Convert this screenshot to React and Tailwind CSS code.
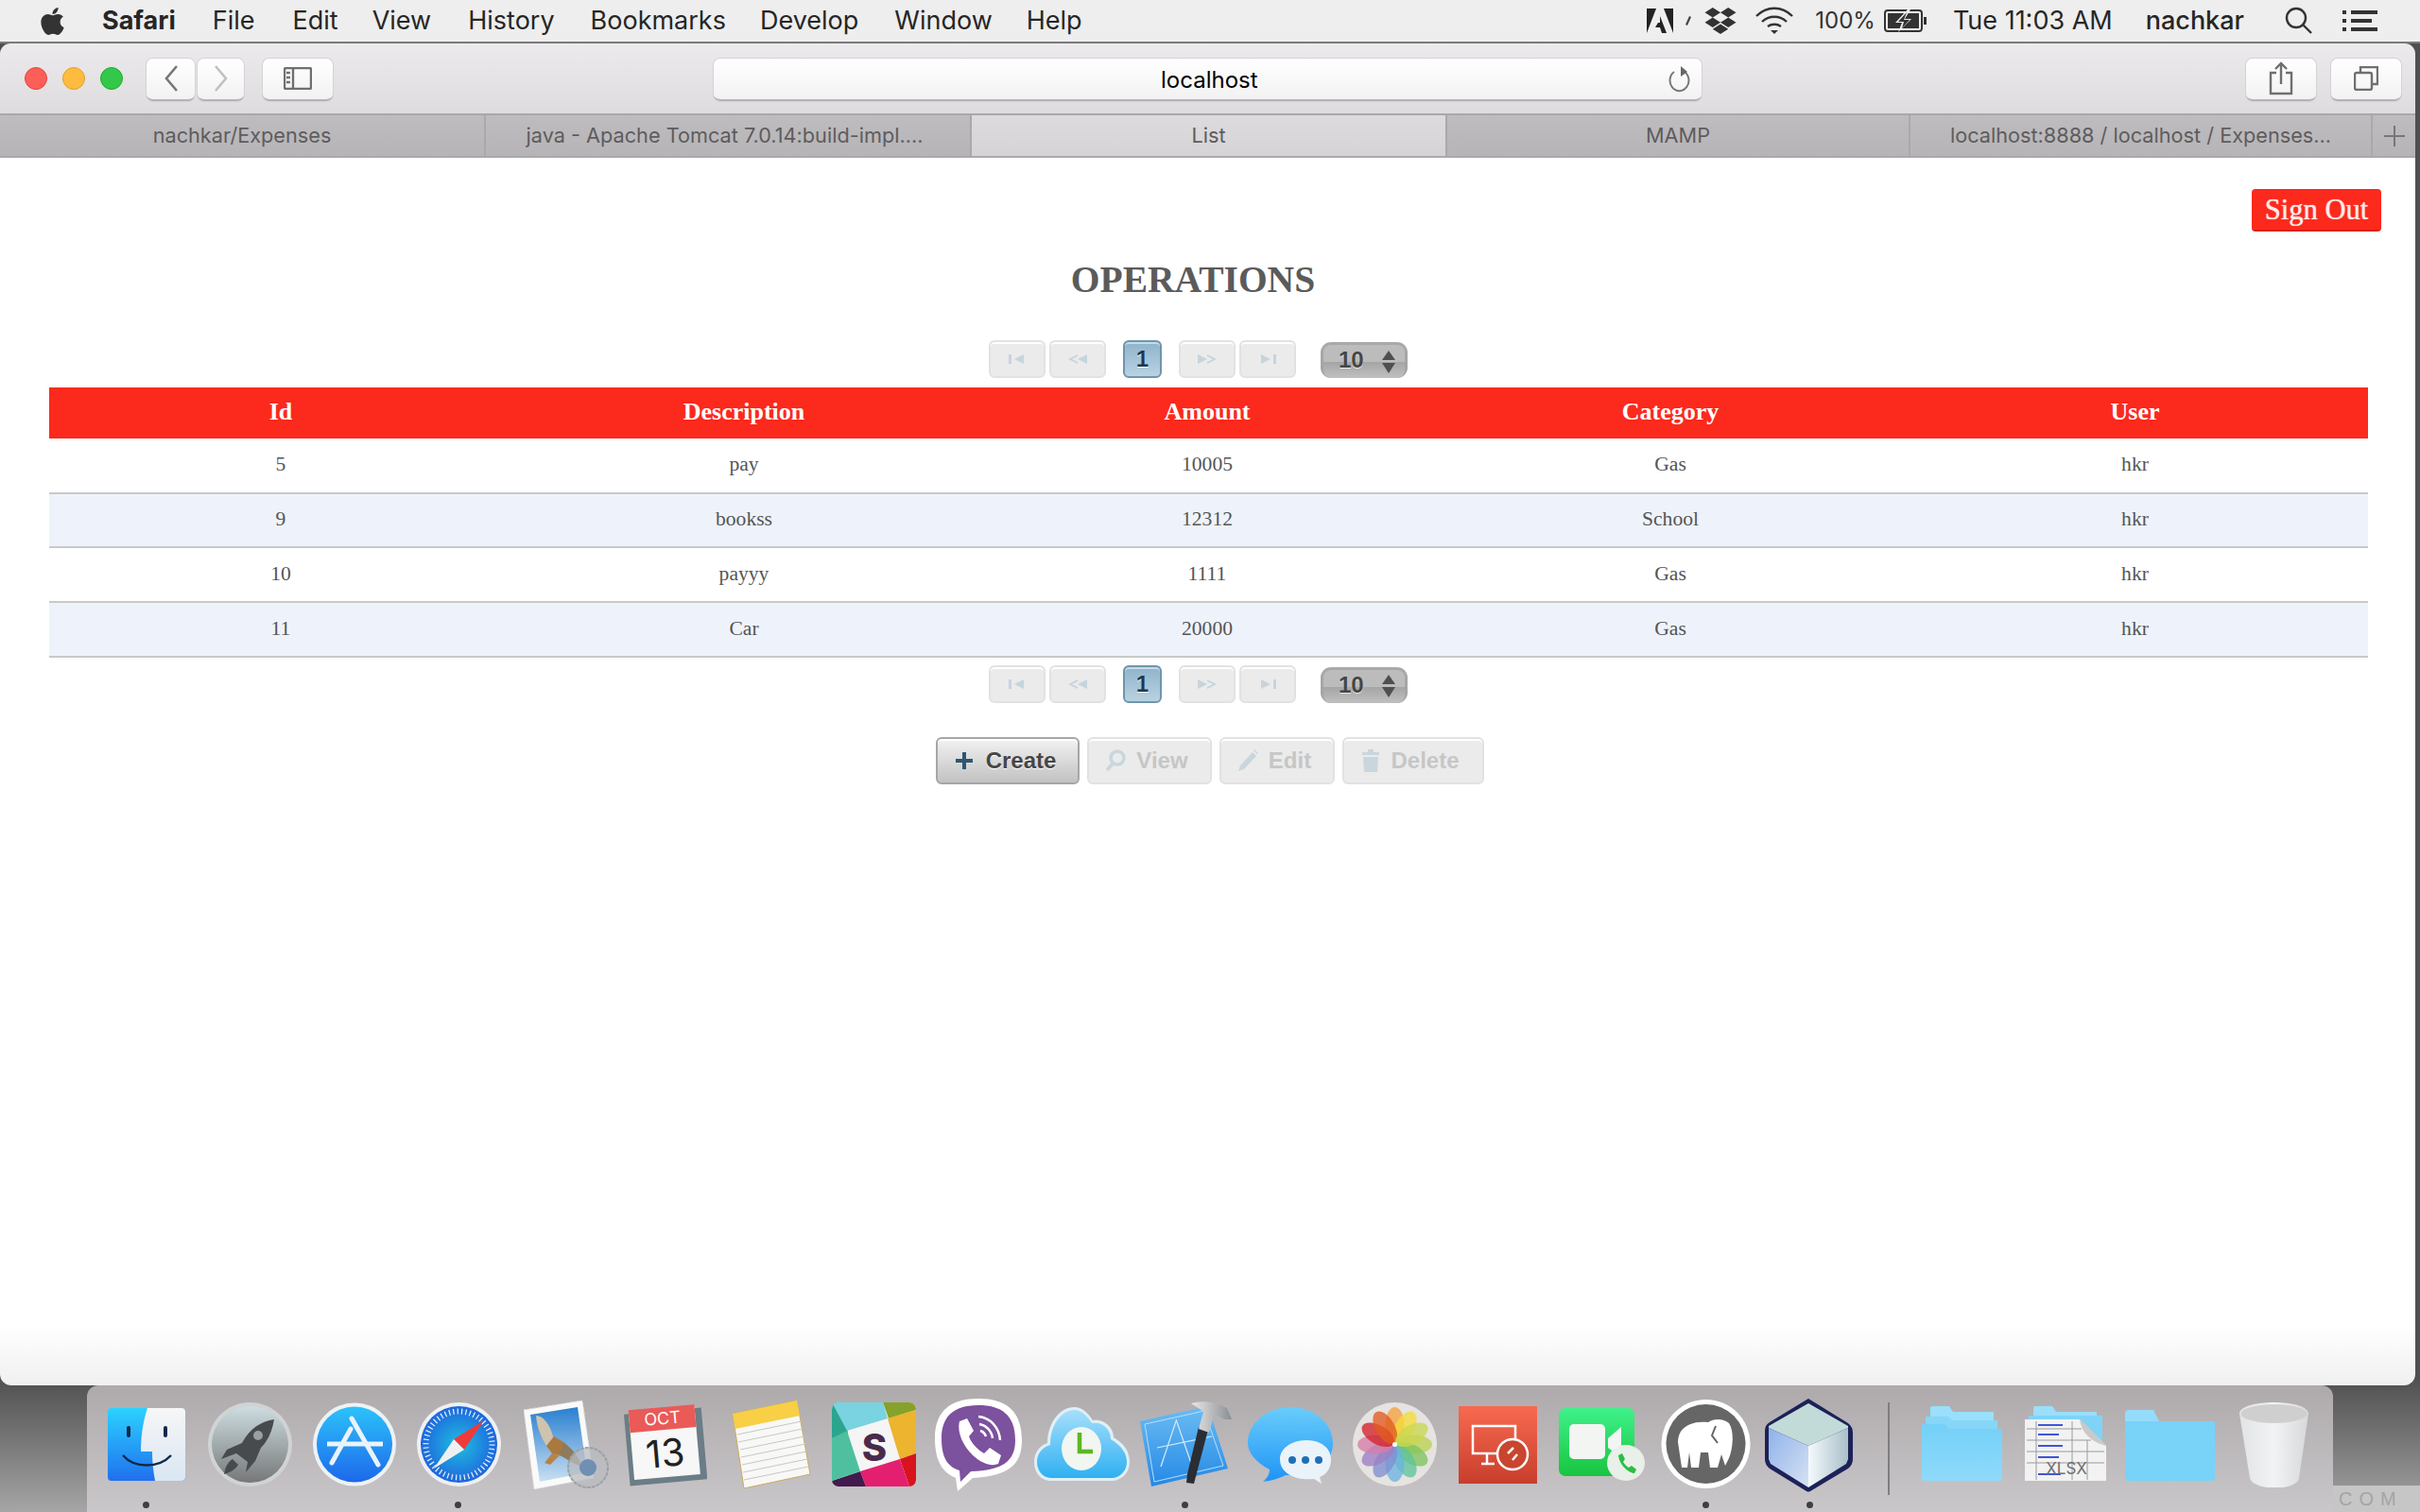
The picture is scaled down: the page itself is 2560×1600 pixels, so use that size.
import { FaApple, FaDropbox } from "react-icons/fa";

const rows = [
  ["5", "pay", "10005", "Gas", "hkr"],
  ["9", "bookss", "12312", "School", "hkr"],
  ["10", "payyy", "1111", "Gas", "hkr"],
  ["11", "Car", "20000", "Gas", "hkr"],
];

function PagerButton({ points, bar }) {
  return (
    <div className="w-[60px] h-[40px] rounded-[6px] border-2 border-[#e2e2e2] bg-[#ebebeb] shadow-[inset_0_2px_0_#fff] flex items-center justify-center">
      <svg width="22" height="14" viewBox="0 0 22 14" fill="#c6d4dd">
        {points.map((p) => (
          <polygon key={p} points={p} />
        ))}
        {bar && <rect x={bar} y="2" width="3" height="10" />}
      </svg>
    </div>
  );
}

function Paginator() {
  return (
    <div className="flex items-center ml-[1046px] h-[40px]">
      <PagerButton points={["18,2 18,12 8,7"]} bar="2" />
      <div className="ml-[4px]">
        <PagerButton points={["21,2 21,12 11,7", "11,2 11,4 5,7 11,10 11,12 1,7"]} />
      </div>
      <div className="ml-[18px] w-[41px] h-[40px] rounded-[6px] border-2 border-[#6f95ad] bg-gradient-to-b from-[#8fb4cb] to-[#b9d2e1] shadow-[inset_0_2px_0_#c5dbe8] flex items-center justify-center text-[24px] font-bold text-[#1c3a50] [text-shadow:0_1px_0_#fff] font-['Liberation_Sans',sans-serif]">
        1
      </div>
      <div className="ml-[18px]">
        <PagerButton points={["1,2 1,12 11,7", "11,2 11,4 17,7 11,10 11,12 21,7"]} />
      </div>
      <div className="ml-[4px]">
        <PagerButton points={["4,2 4,12 14,7"]} bar="17" />
      </div>
      <div className="ml-[26px] mt-[2px] w-[92px] h-[38px] rounded-[11px] bg-gradient-to-b from-[#a9a9a9] to-[#a2a2a2] p-[3px] pb-0">
        <div className="h-full rounded-[8px] bg-[linear-gradient(to_bottom,#bcbcbc_0%,#bcbcbc_50%,#a5a5a5_52%,#c0c0c0_100%)] flex items-center justify-between pl-[16px] pr-[10px] text-[24px] font-bold text-[#454545] [text-shadow:0_1px_0_#eee] font-['Liberation_Sans',sans-serif]">
          <span className="-mt-[3px]">10</span>
          <svg width="14" height="24" viewBox="0 0 14 24" fill="#4f4f4f">
            <polygon points="7,0 14,10 0,10" />
            <polygon points="7,24 14,13 0,13" />
          </svg>
        </div>
      </div>
    </div>
  );
}

function ActionButton({ label, width, children, active }) {
  return (
    <div
      className={
        active
          ? "h-[50px] rounded-[6px] border-2 border-[#a6a6a6] bg-gradient-to-b from-[#f2f2f2] to-[#c2c2c2] shadow-[inset_0_2px_0_#fff] flex items-center justify-center gap-[13px] pr-[5px] text-[#464646] [text-shadow:0_1px_0_#fff] w-[152px]"
          : width + " h-[50px] rounded-[6px] border-2 border-[#e2e2e2] bg-[#ebebeb] shadow-[inset_0_2px_0_#fff] flex items-center justify-center gap-[11px] pr-[6px] text-[#c6c6c6]"
      }
    >
      {children}
      <span className="text-[24px] font-bold font-['Liberation_Sans',sans-serif]">{label}</span>
    </div>
  );
}

function MenuBar() {
  return (
    <div className="h-[44px] bg-[#eeeeee] flex items-center text-[27px] text-[#262626] font-['Inter',sans-serif]">
      <FaApple className="ml-[39px] w-[33px] h-[33px] text-[#333]" />
      <span className="ml-[36px] font-bold">Safari</span>
      <span className="ml-[39px]">File</span>
      <span className="ml-[40px]">Edit</span>
      <span className="ml-[36px]">View</span>
      <span className="ml-[39px]">History</span>
      <span className="ml-[38px]">Bookmarks</span>
      <span className="ml-[36px]">Develop</span>
      <span className="ml-[38px]">Window</span>
      <span className="ml-[36px]">Help</span>
      <div className="ml-auto flex items-center">
        <svg className="w-[28px] h-[26px]" viewBox="0 0 28 26" fill="#222">
          <polygon points="0,0 10,0 0,26" />
          <polygon points="18,0 28,0 28,26" />
          <polygon points="14,8 21,26 16,26 14,20 9,20 12,15 14,15" />
        </svg>
        <svg className="ml-[13px] w-[6px] h-[10px]" viewBox="0 0 6 10" fill="#444">
          <polygon points="4,0 6,1 2,10 0,9" />
        </svg>
        <FaDropbox className="ml-[13px] w-[36px] h-[32px] text-[#333]" />
        <svg className="ml-[19px] w-[40px] h-[30px]" viewBox="0 0 40 30" fill="none" stroke="#333" strokeWidth="2.4">
          <path d="M1 10 C12 -1 28 -1 39 10" />
          <path d="M7 16 C14 9 26 9 33 16" />
          <path d="M13 21 C17 18 23 18 27 21" />
          <polygon points="20,29 16,25 24,25" fill="#333" stroke="none" />
        </svg>
        <span className="ml-[23px] text-[24px] text-[#333]">100%</span>
        <svg className="ml-[9px] w-[46px] h-[24px]" viewBox="0 0 46 24">
          <rect x="1" y="1" width="39" height="22" rx="3" fill="none" stroke="#333" strokeWidth="2" />
          <rect x="4" y="4" width="33" height="16" fill="#333" />
          <polygon points="25,0 12,14 19,14 15,24 29,10 22,10 28,0" fill="#eee" />
          <polygon points="24,3 15,13 21,13 19,20 27,11 21,11" fill="#333" />
          <rect x="42" y="8" width="3" height="8" fill="#333" />
        </svg>
        <span className="ml-[27px]">Tue 11:03 AM</span>
        <span className="ml-[35px] font-medium">nachkar</span>
        <svg className="ml-[43px] w-[30px] h-[30px]" viewBox="0 0 30 30" fill="none" stroke="#333" strokeWidth="2.4">
          <circle cx="12" cy="12" r="10" />
          <line x1="19" y1="19" x2="28" y2="28" />
        </svg>
        <svg className="ml-[31px] mr-[45px] w-[37px] h-[22px]" viewBox="0 0 37 22" fill="#333">
          <rect x="0" y="0" width="4" height="4" />
          <rect x="0" y="9" width="4" height="4" />
          <rect x="0" y="18" width="4" height="4" />
          <rect x="9" y="0" width="28" height="4" />
          <rect x="9" y="9" width="22" height="4" />
          <rect x="9" y="18" width="28" height="4" />
        </svg>
      </div>
    </div>
  );
}

function ToolButton({ className, children }) {
  return (
    <div className={className + " h-[45px] rounded-[7px] bg-gradient-to-b from-white to-[#f2f2f2] border-b-2 border-[#b4b4b4] shadow-[0_0_0_1px_#d4d2d4] flex items-center"}>
      {children}
    </div>
  );
}

function Toolbar() {
  return (
    <div className="h-[76px] rounded-t-[11px] bg-gradient-to-b from-[#eceaec] to-[#dedcde] border-b-2 border-[#a9a9a9] flex items-center pt-[2px]">
      <div className="ml-[26px] -mt-[2px] w-[24px] h-[24px] rounded-full bg-[#fc5f58] border border-[#e0443e]" />
      <div className="ml-[16px] -mt-[2px] w-[24px] h-[24px] rounded-full bg-[#fdbc40] border border-[#dfa023]" />
      <div className="ml-[16px] -mt-[2px] w-[24px] h-[24px] rounded-full bg-[#34c84a] border border-[#1dac2c]" />
      <ToolButton className="ml-[25px] w-[51px] justify-center">
        <svg width="16" height="30" viewBox="0 0 16 30" fill="none" stroke="#777" strokeWidth="2.6"><path d="M14 2 L3 15 L14 28" /></svg>
      </ToolButton>
      <ToolButton className="ml-[3px] w-[49px] justify-center">
        <svg width="16" height="30" viewBox="0 0 16 30" fill="none" stroke="#c0c0c0" strokeWidth="2.6"><path d="M2 2 L13 15 L2 28" /></svg>
      </ToolButton>
      <ToolButton className="ml-[20px] w-[74px] justify-center">
        <svg width="30" height="24" viewBox="0 0 30 24" fill="none" stroke="#6f6f6f" strokeWidth="2.4">
          <rect x="1" y="1" width="28" height="22" rx="1.5" />
          <line x1="10" y1="1" x2="10" y2="23" />
          <path d="M3 6 H7 M3 11 H7 M3 16 H7" />
        </svg>
      </ToolButton>
      <ToolButton className="ml-[403px] w-[1045px] justify-between">
        <span className="ml-[473px] mt-[3px] text-[24px] text-black font-['Inter',sans-serif]">localhost</span>
        <svg className="mr-[12px] -mt-[1px]" width="24" height="30" viewBox="0 0 24 30" fill="none" stroke="#777" strokeWidth="2">
          <path d="M7 8 A 10 11 0 1 0 18 8" />
          <polygon points="14,2 21,8 14,13" fill="#666" stroke="none" />
        </svg>
      </ToolButton>
      <ToolButton className="ml-[576px] w-[74px] justify-center">
        <svg width="26" height="36" viewBox="0 0 26 36" fill="none" stroke="#6f6f6f" strokeWidth="2.4">
          <path d="M8 12 H2 V34 H24 V12 H18" />
          <path d="M13 24 V2 M7 8 L13 2 L19 8" />
        </svg>
      </ToolButton>
      <ToolButton className="ml-[16px] w-[74px] justify-center">
        <svg width="26" height="26" viewBox="0 0 26 26" fill="none" stroke="#6f6f6f" strokeWidth="2.4">
          <rect x="1" y="7" width="18" height="18" rx="2" />
          <path d="M7 7 V1 H25 V19 H19" />
        </svg>
      </ToolButton>
    </div>
  );
}

function Tab({ width, active, children }) {
  return (
    <div
      className={
        width +
        (active
          ? " bg-gradient-to-b from-[#dddbdd] to-[#d5d3d5] border-r-2 border-[#a9a9a9]"
          : " bg-gradient-to-b from-[#bebcbe] to-[#b6b4b6] border-r-2 border-[#a9a9a9]") +
        " h-full flex items-center justify-center text-[21.7px] text-[#5e5c5e] font-['Inter',sans-serif]"
      }
    >
      {children}
    </div>
  );
}

function Tabs() {
  return (
    <div className="h-[45px] flex border-b-2 border-[#a9a9a9]">
      <Tab width="w-[514px]">nachkar/Expenses</Tab>
      <Tab width="w-[514px] pr-[7px]">java - Apache Tomcat 7.0.14:build-impl....</Tab>
      <Tab width="w-[503px]" active>List</Tab>
      <Tab width="w-[490px]">MAMP</Tab>
      <Tab width="w-[489px]">localhost:8888 / localhost / Expenses...</Tab>
      <div className="flex-1 h-full bg-gradient-to-b from-[#bebcbe] to-[#b6b4b6] flex items-center justify-center">
        <svg width="24" height="24" viewBox="0 0 24 24" stroke="#777" strokeWidth="2"><path d="M12 1 V23 M1 12 H23" /></svg>
      </div>
    </div>
  );
}

function Page() {
  return (
    <div className="flex-1 rounded-b-[12px] bg-[linear-gradient(to_bottom,#ffffff_0%,#ffffff_95%,#f0f0f0_100%)] flex flex-col font-['Liberation_Serif',serif]">
      <div className="flex justify-end pt-[33px] pr-[36px]">
        <div className="w-[137px] h-[45px] rounded-[4px] bg-[#fc291d] border-b-2 border-[#d92118] flex items-center justify-center pt-[2px] text-[30.5px] text-[#ffe9e6] [text-shadow:0_0_1px_#fff]">
          Sign Out
        </div>
      </div>
      <h1 className="mt-[22px] h-[60px] flex items-center justify-center pr-[31px] text-[39.5px] font-bold text-[#5b5b5b]">OPERATIONS</h1>
      <div className="mt-[33px]">
        <Paginator />
      </div>
      <table className="mt-[10px] ml-[52px] w-[2453px] table-fixed">
        <colgroup>
          <col className="w-[490px]" />
          <col className="w-[490px]" />
          <col className="w-[490px]" />
          <col className="w-[490px]" />
          <col className="w-[493px]" />
        </colgroup>
        <thead>
          <tr className="bg-[#fc291d] text-white text-[26px] font-bold h-[54px]">
            <th className="pb-[4px]">Id</th>
            <th className="pb-[4px]">Description</th>
            <th className="pb-[4px]">Amount</th>
            <th className="pb-[4px]">Category</th>
            <th className="pb-[4px]">User</th>
          </tr>
        </thead>
        <tbody>
          {rows.map((row, i) => (
            <tr key={row[0]} className={i % 2 ? "bg-[#eef3fb]" : "bg-white"}>
              {row.map((cell, j) => (
                <td key={j} className="h-[57.7px] text-center text-[21.6px] text-[#555] border-b-2 border-[#c9c9c9] pb-[2px]">
                  {cell}
                </td>
              ))}
            </tr>
          ))}
        </tbody>
      </table>
      <div className="mt-[8px]">
        <Paginator />
      </div>
      <div className="mt-[36px] ml-[990px] flex gap-[8px]">
        <ActionButton label="Create" active>
          <svg width="20" height="20" viewBox="0 0 20 20" fill="#30566f"><path d="M8 1 H12 V8 H19 V12 H12 V19 H8 V12 H1 V8 H8 Z" /></svg>
        </ActionButton>
        <ActionButton label="View" width="w-[132px]">
          <svg width="22" height="24" viewBox="0 0 22 24" fill="none" stroke="#c9d6dd" strokeWidth="3.5">
            <circle cx="13" cy="9" r="7" />
            <line x1="8" y1="15" x2="2" y2="22" />
          </svg>
        </ActionButton>
        <ActionButton label="Edit" width="w-[122px]">
          <svg width="22" height="24" viewBox="0 0 22 24" fill="#c9d6dd">
            <polygon points="16,3 20,7 7,21 1,23 3,17" />
            <polygon points="18,0 22,4 21,5 17,1" />
          </svg>
        </ActionButton>
        <ActionButton label="Delete" width="w-[150px]">
          <svg width="20" height="24" viewBox="0 0 20 24" fill="#c9d6dd">
            <rect x="1" y="3" width="18" height="3" />
            <rect x="7" y="0" width="6" height="3" />
            <path d="M2 8 H18 L17 24 H3 Z" />
          </svg>
        </ActionButton>
      </div>
    </div>
  );
}

function Dock() {
  return (
    <div className="w-[2376px] ml-[92px] h-[134px] rounded-t-[12px] bg-gradient-to-b from-[#aeaaac] to-[#cac7ca] flex flex-col">
      <div className="flex items-start h-[123px] font-['Inter',sans-serif]">
        {/* finder */}
        <svg className="ml-[22px] mt-[24px] w-[82px] h-[77px]" viewBox="0 0 82 77">
          <defs>
            <linearGradient id="fb" x1="0" y1="0" x2="0" y2="1"><stop offset="0" stopColor="#2bd2ff" /><stop offset="1" stopColor="#2070ee" /></linearGradient>
            <linearGradient id="fw" x1="0" y1="0" x2="0" y2="1"><stop offset="0" stopColor="#f6f6f7" /><stop offset="1" stopColor="#d9e7f3" /></linearGradient>
          </defs>
          <rect width="82" height="77" rx="4" fill="url(#fb)" />
          <path d="M42 0 H78 A4 4 0 0 1 82 4 V73 A4 4 0 0 1 78 77 H50 C48 66 47 56 47 46 H35 C35 28 38 12 42 0 Z" fill="url(#fw)" />
          <rect x="20" y="19" width="4" height="12" rx="2" fill="#10294d" />
          <rect x="59" y="19" width="4" height="12" rx="2" fill="#10294d" />
          <path d="M16 50 C28 64 54 64 67 50" fill="none" stroke="#10294d" strokeWidth="2.5" />
        </svg>
        {/* launchpad */}
        <svg className="ml-[24px] mt-[18px] w-[89px] h-[89px]" viewBox="0 0 89 89">
          <defs>
            <linearGradient id="lp" x1="0" y1="0" x2="0" y2="1"><stop offset="0" stopColor="#cddde1" /><stop offset="1" stopColor="#767878" /></linearGradient>
          </defs>
          <circle cx="44.5" cy="44.5" r="44.5" fill="#d0d3d4" />
          <circle cx="44.5" cy="44.5" r="40.5" fill="url(#lp)" />
          <path d="M70 18 C56 20 44 28 36 43 L20 50 L14 60 L30 54 L42 63 L40 74 L50 62 L56 48 C64 40 68 30 70 18 Z" fill="#484b4e" />
          <path d="M26 60 C20 64 18 70 17 76 C24 74 29 71 32 66 Z" fill="#484b4e" />
          <circle cx="53" cy="35" r="5" fill="#9a9fa2" />
        </svg>
        {/* app store */}
        <svg className="ml-[22px] mt-[18px] w-[88px] h-[89px]" viewBox="0 0 88 89">
          <defs>
            <linearGradient id="as" x1="0" y1="0" x2="0" y2="1"><stop offset="0" stopColor="#2cc2fb" /><stop offset="1" stopColor="#1d69ea" /></linearGradient>
          </defs>
          <circle cx="44" cy="44.5" r="44" fill="#eef2f5" />
          <circle cx="44" cy="44.5" r="40" fill="url(#as)" />
          <g stroke="#eaf3fb" strokeWidth="5" strokeLinecap="round" fill="none">
            <path d="M15 44 H74" strokeLinecap="butt" />
            <path d="M41 17 L69 66" />
            <path d="M40 28 L20 64" />
          </g>
        </svg>
        {/* safari */}
        <svg className="ml-[22px] mt-[18px] w-[89px] h-[89px]" viewBox="0 0 89 89">
          <defs>
            <radialGradient id="sf"><stop offset="0" stopColor="#1dbfe0" /><stop offset="1" stopColor="#1f66dd" /></radialGradient>
          </defs>
          <circle cx="44.5" cy="44.5" r="44.5" fill="#eef1f3" />
          <circle cx="44.5" cy="44.5" r="40.5" fill="url(#sf)" />
          <circle cx="44.5" cy="44.5" r="35" fill="none" stroke="#e8f3fb" strokeWidth="6" strokeDasharray="1.2 3.2" />
          <polygon points="71,19 50,50 39,39" fill="#ee3a3a" />
          <polygon points="18,70 50,50 39,39" fill="#f0f0f0" />
        </svg>
        {/* mail */}
        <svg className="ml-[24px] mt-[16px] w-[90px] h-[94px]" viewBox="0 0 90 94">
          <defs>
            <linearGradient id="ml" x1="0" y1="0" x2="0" y2="1"><stop offset="0" stopColor="#2a7fd0" /><stop offset="1" stopColor="#c9e0f2" /></linearGradient>
          </defs>
          <polygon points="0,10 62,0 74,82 11,94" fill="#fafafa" stroke="#ddd" strokeWidth="1" strokeDasharray="3 2" />
          <polygon points="7,15 57,7 67,76 17,86" fill="url(#ml)" />
          <path d="M13 16 C20 16 28 24 32 42 L24 48 C18 38 14 28 13 16 Z" fill="#cfc3ae" />
          <path d="M24 48 L32 38 L42 44 L44 52 L38 58 L30 56 Z" fill="#a9793f" />
          <path d="M30 56 L38 58 L28 68 L22 66 Z" fill="#b6834a" />
          <path d="M42 44 C50 50 58 58 62 70 C54 68 46 62 38 58 Z" fill="#8f7a5c" />
          <circle cx="68" cy="71" r="21" fill="#b8bcc0" fillOpacity="0.75" stroke="#9da1a5" strokeWidth="2" strokeDasharray="4 1" />
          <circle cx="68" cy="71" r="9" fill="#6f8fb3" />
        </svg>
        {/* calendar */}
        <svg className="ml-[16px] mt-[19px] w-[88px] h-[88px]" viewBox="0 0 88 88">
          <g transform="rotate(-5 44 44)">
            <rect x="3" y="8" width="82" height="76" fill="#6b7d86" />
            <rect x="8" y="6" width="70" height="72" fill="#f7f7f7" />
            <rect x="8" y="4" width="70" height="24" fill="#ea5a57" />
            <text x="43" y="22" textAnchor="middle" fontSize="18" fill="#fff">OCT</text>
            <text x="43" y="67" textAnchor="middle" fontSize="40" fill="#222">13</text>
          </g>
        </svg>
        {/* notes */}
        <svg className="ml-[27px] mt-[16px] w-[82px] h-[93px]" viewBox="0 0 82 93">
          <polygon points="0,14 68,0 82,78 12,93" fill="#f8f8f6" stroke="#c9ac5e" strokeWidth="1" />
          <polygon points="0,14 68,0 71,16 3,30" fill="#f8cf45" />
          <g stroke="#c7c7c7" strokeWidth="1">
            <line x1="5" y1="36" x2="73" y2="22" />
            <line x1="6" y1="44" x2="74" y2="30" />
            <line x1="8" y1="52" x2="76" y2="38" />
            <line x1="9" y1="60" x2="77" y2="46" />
            <line x1="10" y1="68" x2="78" y2="54" />
            <line x1="11" y1="76" x2="79" y2="62" />
            <line x1="12" y1="84" x2="80" y2="70" />
          </g>
        </svg>
        {/* slack */}
        <svg className="ml-[23px] mt-[18px] w-[89px] h-[89px]" viewBox="0 0 89 89">
          <defs><clipPath id="sl"><rect width="89" height="89" rx="7" /></clipPath></defs>
          <g clipPath="url(#sl)">
            <rect width="89" height="89" fill="#f5f5f5" />
            <polygon points="0,0 15,0 17,35 0,38" fill="#2ca58d" />
            <polygon points="0,0 54,0 59,17 16,30" fill="#79d3e0" />
            <polygon points="54,0 89,0 89,8 60,17" fill="#86a22a" />
            <polygon points="59,17 89,8 89,54 72,60" fill="#ecb42f" />
            <polygon points="72,60 89,54 89,89 82,89" fill="#d7141e" />
            <polygon points="30,73 72,60 82,89 36,89" fill="#e51f70" />
            <polygon points="0,83 30,73 36,89 0,89" fill="#431a4c" />
            <polygon points="0,38 16,30 30,73 0,83" fill="#4ec0a0" />
            <text x="45" y="62" textAnchor="middle" fontSize="40" fontWeight="800" fill="#4a2a4b">S</text>
          </g>
        </svg>
        {/* viber */}
        <svg className="ml-[20px] mt-[14px] w-[92px] h-[98px]" viewBox="0 0 92 98">
          <path d="M46 0 C74 0 92 12 92 44 C92 70 78 82 40 84 L24 98 L22 84 C8 78 0 66 0 42 C0 12 18 0 46 0 Z" fill="#fff" />
          <path d="M46 7 C70 7 85 17 85 44 C85 66 72 76 38 77 L27 88 L26 76 C13 72 7 62 7 42 C7 17 22 7 46 7 Z" fill="#7c519d" />
          <path d="M26 24 L34 21 L41 34 L36 40 C39 48 44 53 52 58 L58 52 L70 60 L67 69 C60 72 50 69 40 60 C30 50 23 36 26 24 Z" fill="#fff" />
          <g fill="none" stroke="#fff" strokeWidth="2.5">
            <path d="M46 19 C58 20 68 30 69 44" />
            <path d="M47 27 C54 28 60 34 61 42" />
            <path d="M48 34 C51 35 53 37 54 40" />
          </g>
        </svg>
        {/* cloud clock */}
        <svg className="ml-[13px] mt-[23px] w-[101px] h-[78px]" viewBox="0 0 101 78">
          <defs>
            <linearGradient id="cl" x1="0" y1="0" x2="0" y2="1"><stop offset="0" stopColor="#a6dffb" /><stop offset="1" stopColor="#2fb0f2" /></linearGradient>
          </defs>
          <path d="M18 78 C6 78 0 68 0 58 C0 46 8 40 14 38 C14 16 28 0 42 0 C52 0 58 8 62 14 C72 12 84 20 84 32 C94 38 101 46 101 58 C101 70 92 78 82 78 Z" fill="#dfeff6" />
          <path d="M18 75 C8 75 3 66 3 58 C3 48 10 42 17 40 C17 18 30 3 42 3 C51 3 57 11 61 17 C71 15 81 22 81 34 C91 40 98 48 98 58 C98 68 90 75 82 75 Z" fill="url(#cl)" />
          <ellipse cx="50" cy="44" rx="21" ry="23" fill="#f1f6f0" />
          <path d="M48 27 V47 H62" fill="none" stroke="#5eb524" strokeWidth="4.5" />
        </svg>
        {/* xcode */}
        <svg className="ml-[11px] mt-[16px] w-[98px] h-[92px]" viewBox="0 0 98 92">
          <defs>
            <linearGradient id="xc" x1="0" y1="0" x2="0" y2="1"><stop offset="0" stopColor="#6cbcf2" /><stop offset="1" stopColor="#2489e6" /></linearGradient>
            <linearGradient id="hm" x1="0" y1="0" x2="1" y2="0"><stop offset="0" stopColor="#e8e8e8" /><stop offset="1" stopColor="#8a8f94" /></linearGradient>
          </defs>
          <polygon points="0,22 72,6 93,72 12,91" fill="url(#xc)" />
          <polygon points="5,25 68,11 88,69 15,86" fill="none" stroke="#b6def8" strokeWidth="1" />
          <g fill="none" stroke="#d3ecfb" strokeWidth="1.2">
            <path d="M38 20 L56 72" />
            <path d="M38 22 L22 70" />
            <path d="M18 50 L76 38" />
          </g>
          <polygon points="62,28 72,31 57,88 49,87 50,78" fill="#2a2d33" />
          <path d="M54 3 C68 -1 80 2 92 8 L97 20 L89 20 L79 14 L73 34 L62 30 L67 12 C62 8 58 6 54 3 Z" fill="url(#hm)" />
        </svg>
        {/* messages */}
        <svg className="ml-[16px] mt-[23px] w-[90px] h-[81px]" viewBox="0 0 90 81">
          <defs>
            <linearGradient id="ms" x1="0" y1="0" x2="0" y2="1"><stop offset="0" stopColor="#69cdfb" /><stop offset="1" stopColor="#1f94f6" /></linearGradient>
          </defs>
          <path d="M45 0 C70 0 90 17 90 38 C90 60 70 72 40 72 C30 77 22 78 16 79 C21 75 23 70 23 66 C8 58 0 48 0 38 C0 17 20 0 45 0 Z" fill="url(#ms)" />
          <path d="M62 35 C78 35 88 44 88 55 C88 66 82 72 76 74 L78 81 L70 76 C54 78 34 72 34 55 C34 44 46 35 62 35 Z" fill="#eaf3fa" />
          <circle cx="47" cy="56" r="4" fill="#1f6fb6" />
          <circle cx="61" cy="56" r="4" fill="#1f6fb6" />
          <circle cx="75" cy="56" r="4" fill="#1f6fb6" />
        </svg>
        {/* photos */}
        <svg className="ml-[21px] mt-[18px] w-[89px] h-[89px]" viewBox="0 0 89 89">
          <circle cx="44.5" cy="44.5" r="44.5" fill="#e6e4e1" />
          {[
            ["#f5a13f", 0], ["#f4dd3a", 30], ["#b9d24f", 90], ["#7ec45c", 120], ["#5fc49a", 150], ["#6bb3e0", 180],
            ["#7f8fcf", 210], ["#9b7fc4", 240], ["#d57ea8", 270], ["#d4232a", 300], ["#e25a1e", 330], ["#c9d750", 60],
          ].map(([color, angle]) => (
            <ellipse key={angle} cx="44.5" cy="24" rx="10" ry="19" fill={color} fillOpacity="0.78" transform={`rotate(${angle} 44.5 44.5)`} />
          ))}
          <circle cx="44.5" cy="44.5" r="2.5" fill="#fff" />
        </svg>
        {/* remote desktop */}
        <svg className="ml-[23px] mt-[22px] w-[83px] h-[82px]" viewBox="0 0 83 82">
          <defs>
            <linearGradient id="rd" x1="0" y1="0" x2="0" y2="1"><stop offset="0" stopColor="#f86a50" /><stop offset="1" stopColor="#c73e2c" /></linearGradient>
          </defs>
          <rect width="83" height="82" fill="url(#rd)" />
          <g fill="none" stroke="#fff" strokeWidth="2.5">
            <path d="M46 50 H15 V21 H60 V34" />
            <path d="M30 51 V60 M24 61 H38" />
            <circle cx="57" cy="51" r="16" fill="#c9452f" />
            <path d="M58 44 L52 50 M57 57 L62 51" />
          </g>
        </svg>
        {/* facetime */}
        <svg className="ml-[23px] mt-[24px] w-[91px] h-[77px]" viewBox="0 0 91 77">
          <defs>
            <linearGradient id="ft" x1="0" y1="0" x2="0" y2="1"><stop offset="0" stopColor="#3ef28a" /><stop offset="1" stopColor="#19c43f" /></linearGradient>
          </defs>
          <rect width="80" height="72" rx="7" fill="url(#ft)" />
          <rect x="11" y="17" width="38" height="37" rx="5" fill="#f3f5f3" />
          <polygon points="52,32 66,20 66,52 52,42" fill="#f3f5f3" />
          <ellipse cx="71" cy="58" rx="20" ry="19" fill="#e9efe9" />
          <path d="M63 50 L67 48 L70 54 L68 57 C70 60 72 62 74 63 L77 61 L82 65 L80 69 C74 69 64 60 63 50 Z" fill="#29bf45" />
        </svg>
        {/* mamp */}
        <svg className="ml-[17px] mt-[15px] w-[95px] h-[94px]" viewBox="0 0 95 94">
          <ellipse cx="47.5" cy="47" rx="47" ry="47" fill="#fff" />
          <ellipse cx="47.5" cy="47" rx="42" ry="42" fill="#666" />
          <path d="M22 72 L18 45 C18 28 34 22 50 24 C56 20 66 20 72 25 C78 34 76 52 72 62 L68 70 L64 58 L60 72 H52 L50 56 H42 L40 72 H32 L30 56 L28 72 Z" fill="#fff" />
          <path d="M58 28 L54 38 L60 46" fill="none" stroke="#666" strokeWidth="2" />
        </svg>
        {/* netbeans */}
        <svg className="ml-[13px] mt-[12px] w-[97px] h-[102px]" viewBox="0 0 97 102">
          <defs>
            <linearGradient id="nl" x1="0" y1="0" x2="1" y2="1"><stop offset="0" stopColor="#8fb2ea" /><stop offset="1" stopColor="#d7e2f3" /></linearGradient>
            <linearGradient id="nr" x1="0" y1="0" x2="1" y2="0"><stop offset="0" stopColor="#f4fafc" /><stop offset="1" stopColor="#a9bfca" /></linearGradient>
          </defs>
          <path d="M48 2 L90 28 Q95 32 95 38 V66 Q95 72 90 76 L50 100 Q48 101 46 100 L7 76 Q2 72 2 66 V36 Q2 30 7 27 Z" fill="#1c2258" />
          <polygon points="48,7 90,31 90,33 48,52 6,33 6,31" fill="#c3dbd8" />
          <polygon points="6,33 48,52 48,96 8,71 6,66" fill="url(#nl)" />
          <polygon points="90,33 48,52 48,96 88,71 90,66" fill="url(#nr)" />
        </svg>
        <div className="ml-[35px] mt-[18px] w-[2px] h-[98px] bg-[#7f7d7f]" />
        {/* stack of folders */}
        <svg className="ml-[34px] mt-[22px] w-[85px] h-[79px]" viewBox="0 0 85 79">
          <defs>
            <linearGradient id="fo" x1="0" y1="0" x2="0" y2="1"><stop offset="0" stopColor="#74d0f7" /><stop offset="1" stopColor="#8fdafb" /></linearGradient>
          </defs>
          <path d="M9 2 Q9 0 11 0 H29 L33 6 H76 V20 H9 Z" fill="#9adffb" />
          <path d="M4 11 H28 L32 15 H80 V30 H4 Z" fill="#86d6f8" />
          <path d="M0 21 Q0 19 2 19 H24 L28 24 H83 Q85 24 85 26 V77 Q85 79 83 79 H2 Q0 79 0 77 Z" fill="url(#fo)" />
        </svg>
        {/* spreadsheet over folders */}
        <svg className="ml-[24px] mt-[22px] w-[86px] h-[79px]" viewBox="0 0 86 79">
          <path d="M9 2 Q9 0 11 0 H29 L33 6 H76 V30 H9 Z" fill="#9adffb" />
          <rect x="4" y="10" width="78" height="50" fill="#80d3f7" />
          <path d="M0 14 H58 L86 42 V79 H0 Z" fill="#f2f2f2" />
          <path d="M58 14 C60 28 70 38 86 42 C74 30 68 22 58 14 Z" fill="#c9c9c9" />
          <g stroke="#9a9a9a" strokeWidth="1">
            <line x1="12" y1="16" x2="12" y2="78" />
            <line x1="50" y1="16" x2="50" y2="78" />
            <line x1="66" y1="36" x2="66" y2="78" />
            <line x1="2" y1="24" x2="60" y2="24" />
            <line x1="2" y1="36" x2="70" y2="36" />
            <line x1="2" y1="48" x2="84" y2="48" />
            <line x1="2" y1="60" x2="84" y2="60" />
          </g>
          <g stroke="#3f55d8" strokeWidth="2">
            <line x1="14" y1="20" x2="40" y2="20" />
            <line x1="14" y1="30" x2="36" y2="30" />
            <line x1="14" y1="42" x2="40" y2="42" />
            <line x1="14" y1="54" x2="36" y2="54" />
            <line x1="14" y1="72" x2="38" y2="72" />
          </g>
          <text x="44" y="72" textAnchor="middle" fontSize="17" fill="#707070">XLSX</text>
        </svg>
        {/* folder */}
        <svg className="ml-[20px] mt-[26px] w-[95px] h-[75px]" viewBox="0 0 95 75">
          <path d="M0 4 Q0 0 4 0 H30 L36 12 H92 Q95 12 95 15 V72 Q95 75 92 75 H3 Q0 75 0 72 Z" fill="#95dcfb" />
          <path d="M0 12 H92 Q95 12 95 15 V72 Q95 75 92 75 H3 Q0 75 0 72 Z" fill="#79d2f8" />
        </svg>
        {/* trash */}
        <svg className="ml-[26px] mt-[18px] w-[73px] h-[90px]" viewBox="0 0 73 90">
          <defs>
            <linearGradient id="tr" x1="0" y1="0" x2="1" y2="0"><stop offset="0" stopColor="#e2e3e5" /><stop offset="0.5" stopColor="#f2f3f4" /><stop offset="1" stopColor="#d7d8da" /></linearGradient>
          </defs>
          <path d="M0 12 C0 -4 73 -4 73 12 L63 80 C62 94 14 94 11 80 Z" fill="url(#tr)" />
          <ellipse cx="36.5" cy="12" rx="35" ry="10" fill="#cfcfd0" />
        </svg>
      </div>
      <div className="flex h-[6px]">
        <div className="ml-[59px] w-[7px] h-[7px] rounded-full bg-[#3f3f3f]" />
        <div className="ml-[323px] w-[7px] h-[7px] rounded-full bg-[#3f3f3f]" />
        <div className="ml-[762px] w-[7px] h-[7px] rounded-full bg-[#3f3f3f]" />
        <div className="ml-[544px] w-[7px] h-[7px] rounded-full bg-[#3f3f3f]" />
        <div className="ml-[103px] w-[7px] h-[7px] rounded-full bg-[#3f3f3f]" />
      </div>
    </div>
  );
}

export default function App() {
  return (
    <div className="w-[2560px] h-[1600px] overflow-hidden flex flex-col bg-gradient-to-b from-[#4f4f4f] from-[91%] to-[#a6a6a6]">
      <MenuBar />
      <div className="h-[2px] bg-[#7a7a7a]" />
      <div className="h-[1420px] mr-[5px] flex flex-col">
        <Toolbar />
        <Tabs />
        <Page />
      </div>
      <div className="flex flex-1">
        <Dock />
        <div className="flex-1 flex flex-col justify-end">
          <div className="h-[28px] bg-[#c6c6c6] pl-[6px] flex items-center text-[20px] tracking-[7px] text-[#a4a4a4] font-['Liberation_Sans',sans-serif]">COM</div>
        </div>
      </div>
    </div>
  );
}
